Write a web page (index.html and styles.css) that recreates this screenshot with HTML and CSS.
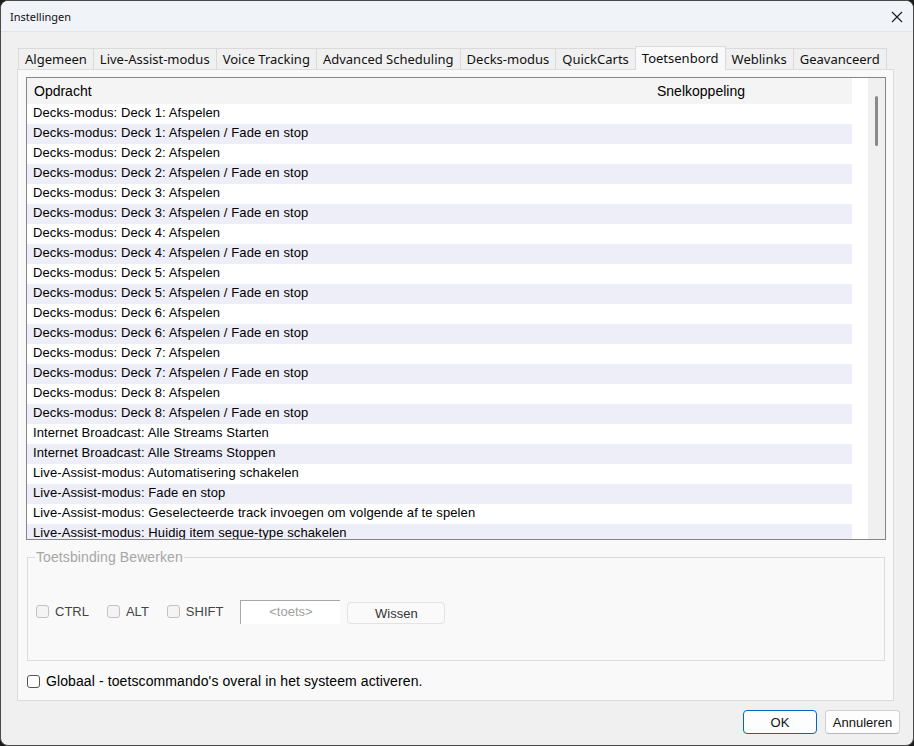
FILE: index.html
```html
<!DOCTYPE html>
<html lang="nl">
<head>
  <meta charset="UTF-8" />
  <title>Instellingen</title>
  <link rel="stylesheet" href="styles.css">
</head>
<body>
  <div class="window">
    <div class="titlebar">
      <span class="title">Instellingen</span>
      <svg class="close" width="12" height="12" viewBox="0 0 12 12">
        <path d="M1 1 L11 11 M11 1 L1 11" stroke="#1a1a1a" stroke-width="1.1" fill="none" />
      </svg>
    </div>

    <div class="content">
      <div class="tabs">
        <div class="tab">Algemeen</div>
        <div class="tab">Live-Assist-modus</div>
        <div class="tab">Voice Tracking</div>
        <div class="tab">Advanced Scheduling</div>
        <div class="tab">Decks-modus</div>
        <div class="tab">QuickCarts</div>
        <div class="tab active">Toetsenbord</div>
        <div class="tab">Weblinks</div>
        <div class="tab">Geavanceerd</div>
      </div>

      <div class="page">
        <div class="list">
          <div class="list-main">
            <div class="list-head">
              <span class="col-cmd">Opdracht</span>
              <span class="col-key">Snelkoppeling</span>
            </div>
            <div class="rows">
              <div class="row">Decks-modus: Deck 1: Afspelen</div>
              <div class="row">Decks-modus: Deck 1: Afspelen / Fade en stop</div>
              <div class="row">Decks-modus: Deck 2: Afspelen</div>
              <div class="row">Decks-modus: Deck 2: Afspelen / Fade en stop</div>
              <div class="row">Decks-modus: Deck 3: Afspelen</div>
              <div class="row">Decks-modus: Deck 3: Afspelen / Fade en stop</div>
              <div class="row">Decks-modus: Deck 4: Afspelen</div>
              <div class="row">Decks-modus: Deck 4: Afspelen / Fade en stop</div>
              <div class="row">Decks-modus: Deck 5: Afspelen</div>
              <div class="row">Decks-modus: Deck 5: Afspelen / Fade en stop</div>
              <div class="row">Decks-modus: Deck 6: Afspelen</div>
              <div class="row">Decks-modus: Deck 6: Afspelen / Fade en stop</div>
              <div class="row">Decks-modus: Deck 7: Afspelen</div>
              <div class="row">Decks-modus: Deck 7: Afspelen / Fade en stop</div>
              <div class="row">Decks-modus: Deck 8: Afspelen</div>
              <div class="row">Decks-modus: Deck 8: Afspelen / Fade en stop</div>
              <div class="row">Internet Broadcast: Alle Streams Starten</div>
              <div class="row">Internet Broadcast: Alle Streams Stoppen</div>
              <div class="row">Live-Assist-modus: Automatisering schakelen</div>
              <div class="row">Live-Assist-modus: Fade en stop</div>
              <div class="row">Live-Assist-modus: Geselecteerde track invoegen om volgende af te spelen</div>
              <div class="row">Live-Assist-modus: Huidig item segue-type schakelen</div>
            </div>
          </div>
          <div class="scrollbar">
            <div class="thumb"></div>
          </div>
        </div>

        <fieldset class="binding">
          <legend>Toetsbinding Bewerken</legend>
          <div class="binding-row">
            <label class="check disabled"><span class="box"></span>CTRL</label>
            <label class="check disabled"><span class="box"></span>ALT</label>
            <label class="check disabled"><span class="box"></span>SHIFT</label>
            <div class="keybox">&lt;toets&gt;</div>
            <button class="btn-clear">Wissen</button>
          </div>
        </fieldset>

        <label class="check global"><span class="box"></span>Globaal - toetscommando's overal in het systeem activeren.</label>
      </div>

      <div class="actions">
        <button class="btn btn-ok">OK</button>
        <button class="btn">Annuleren</button>
      </div>
    </div>
  </div>
</body>
</html>
```

FILE: styles.css
```css
* {
  box-sizing: border-box;
}
html, body {
  margin: 0;
  background: #1c1c1c;
}
body {
  font-family: "Liberation Sans", Arial, sans-serif;
  font-size: 13px;
  color: #000;
}

.window {
  width: 914px;
  height: 746px;
  border: 1px solid #4a4a4a;
  border-radius: 8px;
  background: #f0f0f0;
  overflow: hidden;
  display: flex;
  flex-direction: column;
}

.titlebar {
  height: 31px;
  flex-shrink: 0;
  display: flex;
  align-items: center;
  justify-content: space-between;
  padding: 0 10px 0 9px;
  background: #f0f3f8;
  border-bottom: 1px solid #e4e4e4;
}
.title {
  font-family: "Noto Sans", sans-serif;
  font-size: 11px;
  color: #111;
}
.close {
  margin-top: 1px;
}

.content {
  flex: 1;
  padding: 14px 19px 0 16px;
  display: flex;
  flex-direction: column;
}

/* tab strip */
.tabs {
  display: flex;
  align-items: flex-end;
  height: 23px;
  padding-left: 1px;
  position: relative;
  z-index: 1;
}
.tab {
  height: 21px;
  padding: 0 6px;
  font-family: "Noto Sans", sans-serif;
  font-size: 13px;
  line-height: 21px;
  color: #111;
  background: #f0f0f0;
  border: 1px solid #dadada;
  border-bottom: none;
  margin-right: -1px;
}
.tab.active {
  height: 24px;
  margin-bottom: -1px;
  background: #f9f9f9;
  line-height: 22px;
  position: relative;
  z-index: 2;
}

.page {
  height: 632px;
  background: #f9f9f9;
  border: 1px solid #dcdcdc;
  padding: 7px 7px 0 8px;
}

/* list view */
.list {
  height: 463px;
  border: 1px solid #868686;
  background: #fff;
  display: flex;
}
.list-main {
  flex: 1;
  overflow: hidden;
}
.list-head {
  display: flex;
  height: 26px;
  align-items: center;
  background: #f4f4f4;
  margin-right: 16px;
  font-size: 14px;
}
.col-cmd {
  width: 630px;
  padding-left: 7px;
}
.row {
  height: 20px;
  line-height: 18px;
  padding-left: 6px;
  white-space: nowrap;
  letter-spacing: 0.1px;
}
.rows {
  margin-right: 16px;
}
.row:nth-child(even) {
  background: #eeeef8;
}
.scrollbar {
  width: 17px;
  background: #f0f0f0;
  padding: 18px 0 0 7px;
}
.thumb {
  width: 3px;
  height: 50px;
  background: #898989;
  border-radius: 2px;
}

/* edit group */
.binding {
  margin: 9px 1px 0 1px;
  height: 112px;
  border: 1px solid #dcdcdc;
  padding: 0 8px;
}
.binding legend {
  color: #a6a6a6;
  padding: 0 1px;
  margin-left: -1px;
  font-size: 14px;
  letter-spacing: 0.1px;
}
.binding-row {
  display: flex;
  align-items: center;
  margin-top: 34px;
}

.check {
  display: flex;
  align-items: center;
  gap: 6px;
}
.box {
  width: 13px;
  height: 13px;
  border: 1px solid #555;
  border-radius: 3px;
  background: #fff;
}
.check.disabled {
  color: #444;
  margin-right: 18px;
}
.check.disabled .box {
  border-color: #c2c2c2;
  background: #f4f4f4;
}
.check.disabled:nth-child(3) {
  margin-right: 17px;
}

.keybox {
  width: 100px;
  height: 24px;
  background: #fff;
  border-top: 1px solid #a8a8a8;
  border-left: 1px solid #a8a8a8;
  color: #a0a0a0;
  text-align: center;
  line-height: 22px;
  margin-right: 7px;
}
.btn-clear {
  width: 98px;
  height: 22px;
  margin-top: 3px;
  font-family: "Liberation Sans", Arial, sans-serif;
  font-size: 13px;
  color: #333;
  background: #fafafa;
  border: 1px solid #e3e3e3;
  border-radius: 4px;
}

.check.global {
  margin: 12px 0 0 1px;
  font-size: 14px;
  letter-spacing: 0.1px;
}

/* dialog buttons */
.actions {
  display: flex;
  justify-content: flex-end;
  gap: 8px;
  margin-top: 9px;
  margin-right: -6px;
}
.btn {
  width: 75px;
  height: 24px;
  font-family: "Liberation Sans", Arial, sans-serif;
  font-size: 13px;
  color: #111;
  background: #fdfdfd;
  border: 1px solid #d0d0d0;
  border-bottom-color: #b8b8b8;
  border-radius: 4px;
}
.btn-ok {
  width: 74px;
  border: 1px solid #0067c0;
}
```
